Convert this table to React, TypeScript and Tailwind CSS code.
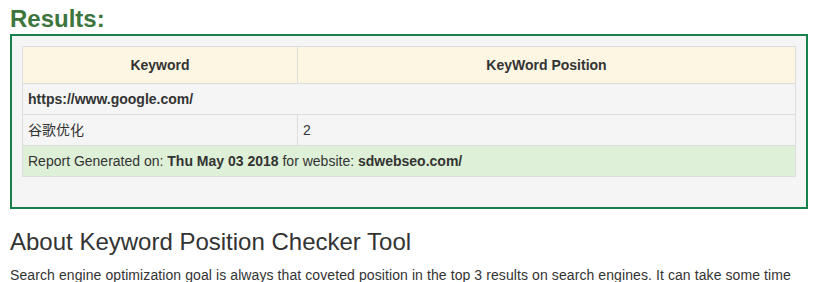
const rows = [{ keyword: '谷歌优化', position: '2' }];

export default function App() {
  return (
    <div className="w-[823px] bg-white px-[10px] text-[14px] leading-[20px] text-[#333] font-['Liberation_Sans',Arial,'Noto_Sans_CJK_SC',sans-serif]">
      <h2 className="pt-[3px] text-[24px] font-bold leading-[31px] text-[#3c763d]">Results:</h2>

      <div className="w-[798px] border-2 border-[#18804b] bg-[#f5f5f5] px-[10px] pt-[10px] pb-[30px]">
        <table className="w-full border-collapse border border-[#ddd]">
          <thead>
            <tr className="h-[37px] bg-[#fcf6e3]">
              <th className="w-[275px] border border-[#ddd] text-center font-bold">Keyword</th>
              <th className="border border-[#ddd] text-center font-bold">KeyWord Position</th>
            </tr>
          </thead>
          <tbody>
            <tr className="h-[31px] bg-[#f5f5f5]">
              <td colSpan={2} className="border border-[#ddd] px-[5px] font-bold">
                https://www.google.com/
              </td>
            </tr>
            {rows.map((r) => (
              <tr key={r.keyword} className="h-[31px] bg-[#f5f5f5]">
                <td className="border border-[#ddd] px-[5px]">{r.keyword}</td>
                <td className="border border-[#ddd] px-[5px]">{r.position}</td>
              </tr>
            ))}
            <tr className="h-[31px] bg-[#dff0d8]">
              <td colSpan={2} className="border border-[#ddd] px-[5px]">
                Report Generated on: <b>Thu May 03 2018</b> for website: <b>sdwebseo.com/</b>
              </td>
            </tr>
          </tbody>
        </table>
      </div>

      <h3 className="mt-[20px] text-[24px] leading-[26px] text-[#333]">About Keyword Position Checker Tool</h3>
      <p className="mt-[10px] whitespace-nowrap tracking-[0.09px]">
        Search engine optimization goal is always that coveted position in the top 3 results on search engines. It can take some time
      </p>
    </div>
  );
}
